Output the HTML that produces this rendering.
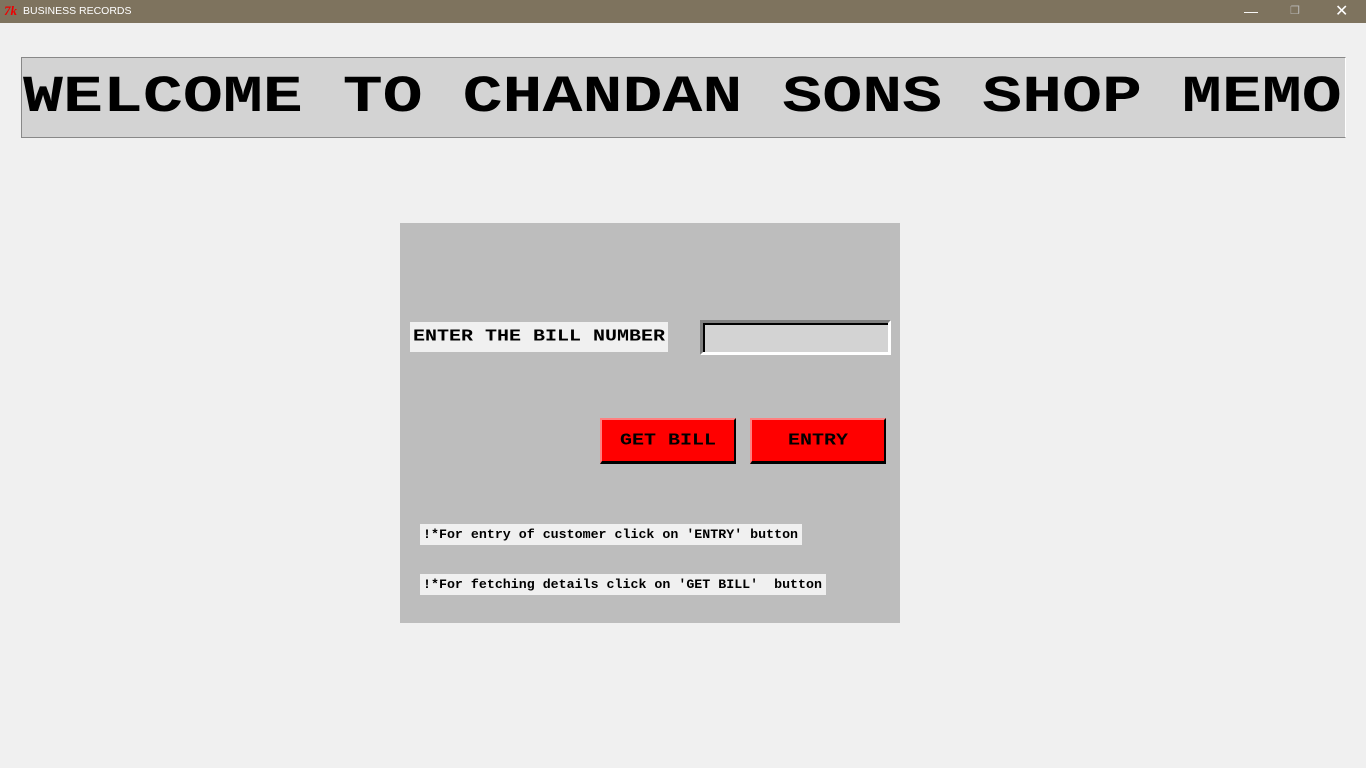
<!DOCTYPE html>
<html><head><style>
body{margin:0;width:1366px;height:768px;background:#f0f0f0;position:relative;overflow:hidden;font-family:"Liberation Mono",monospace;}
.t{position:absolute;left:0;top:0;width:1366px;height:23px;background:#7e735e;color:#fff;font-family:"Liberation Sans",sans-serif;font-size:12px;}
.a{position:absolute;}
.mono{font-family:"Liberation Mono","Courier New",monospace;font-weight:bold;color:#000;white-space:pre;}
.btn{position:absolute;background:#f00;border-top:2px solid #ff8080;border-left:2px solid #ff8080;border-right:2px solid #000;border-bottom:3px solid #000;box-sizing:border-box;display:flex;align-items:center;justify-content:center;font-size:20px;}
</style></head><body>
<div class="t"><span class="a" style="left:4px;top:3px;color:#e00;font-style:italic;font-weight:bold;font-family:'Liberation Serif',serif;font-size:13px">7k</span><span class="a" style="left:23px;top:5px;font-size:10.5px">BUSINESS RECORDS</span>
<span class="a" style="left:1244px;top:3px;font-size:14px">&#8212;</span>
<span class="a" style="left:1290px;top:4px;font-size:11px;color:#bbb">&#10064;</span>
<span class="a" style="left:1335px;top:1px;font-size:16px">&#10005;</span></div>
<div class="a" style="left:21px;top:57px;width:1323px;height:79px;background:#d3d3d3;border:1px solid #888;border-right-color:#fff;border-bottom-color:#888"></div>
<div class="a mono" style="left:23px;top:60px;font-size:66.6px;line-height:75px;transform:scaleY(0.78);transform-origin:0 37px">WELCOME TO CHANDAN SONS SHOP MEMO</div>
<div class="a" style="left:400px;top:223px;width:500px;height:400px;background:#bdbdbd"></div>
<div class="a mono" style="left:410px;top:322px;width:258px;height:30px;background:#f0f0f0;font-size:20px;line-height:30px;padding-left:3px;box-sizing:border-box"><span style="display:inline-block;transform:scaleY(0.85)">ENTER THE BILL NUMBER</span></div>
<div class="a" style="left:700px;top:320px;width:191px;height:35px;box-sizing:border-box;background:#d3d3d3;border-top:3px solid #808080;border-left:3px solid #808080;border-right:3px solid #fff;border-bottom:3px solid #fff;"><div style="width:100%;height:100%;box-sizing:border-box;border-top:2px solid #000;border-left:2px solid #000"></div></div>
<div class="btn mono" style="left:600px;top:418px;width:136px;height:46px"><span style="transform:scaleY(0.85)">GET BILL</span></div>
<div class="btn mono" style="left:750px;top:418px;width:136px;height:46px"><span style="transform:scaleY(0.85)">ENTRY</span></div>
<div class="a mono" style="left:420px;top:524px;width:382px;height:21px;background:#f0f0f0;font-size:13.3px;line-height:21px;padding-left:3px;box-sizing:border-box">!*For entry of customer click on 'ENTRY' button</div>
<div class="a mono" style="left:420px;top:574px;width:406px;height:21px;background:#f0f0f0;font-size:13.3px;line-height:21px;padding-left:3px;box-sizing:border-box">!*For fetching details click on 'GET BILL'  button</div>
</body></html>
